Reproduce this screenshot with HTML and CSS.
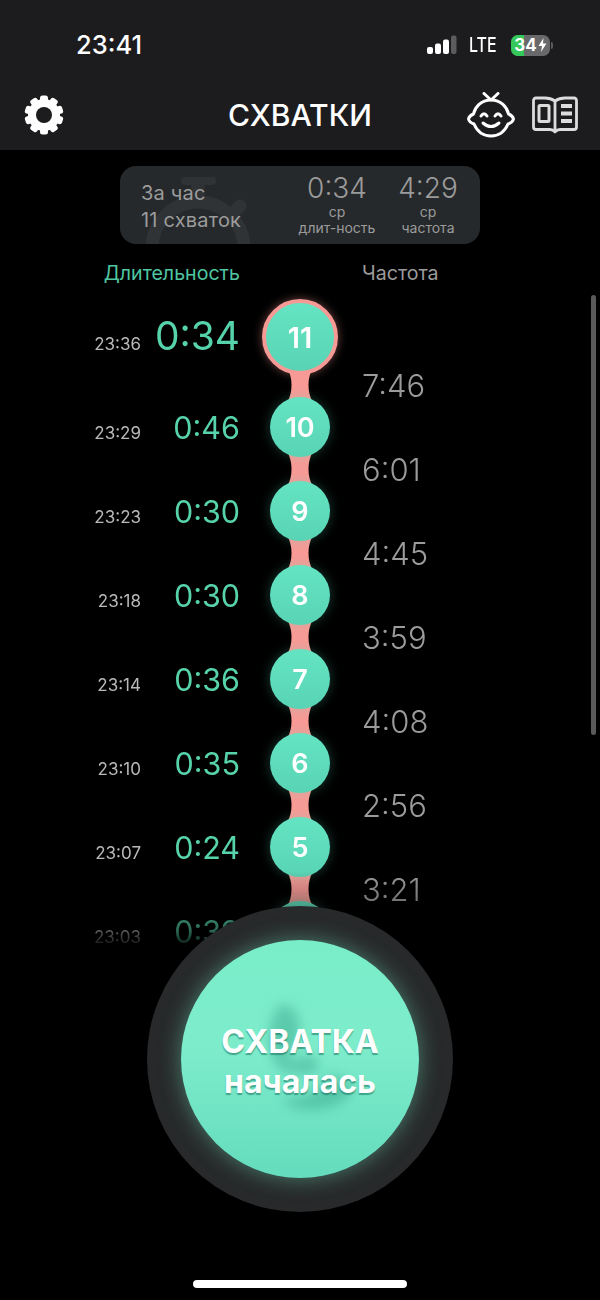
FILE: index.html
```html
<!DOCTYPE html>
<html lang="ru">
<head>
<meta charset="UTF-8">
<meta name="viewport" content="width=device-width, initial-scale=1.0">
<title>Схватки</title>
<link rel="stylesheet" href="styles.css">
</head>
<body>
<div id="screen">
  <div class="top">
    <div class="status">
      <span class="clock">23:41</span>
      <div class="status-right">
        <svg class="signal" width="30" height="20" viewBox="0 0 30 20">
          <rect x="0" y="12" width="6" height="7" rx="2" fill="#fff"/>
          <rect x="8" y="8.500" width="6" height="10.500" rx="2" fill="#fff"/>
          <rect x="16" y="4.500" width="6" height="14.500" rx="2" fill="#fff"/>
          <rect x="24" y="0.500" width="5.500" height="18.500" rx="2" fill="#5c5c5e"/>
        </svg>
        <span class="lte">LTE</span>
        <div class="battery">
          <div class="battery-fill"></div>
          <span class="battery-num">34</span>
          <svg class="bolt" width="9" height="14" viewBox="0 0 9 14"><path d="M5.500 0 L0.500 8 H4 L3 14 L8.500 5.500 H5 Z" fill="#fff"/></svg>
        </div>
        <div class="battery-nub"></div>
      </div>
    </div>
    <div class="nav">
      <svg class="gear" width="40" height="40" viewBox="0 0 40 40">
        <g fill="#fff">
          <rect x="16" y="0.500" width="8" height="39" rx="2.500"/>
          <rect x="16" y="0.500" width="8" height="39" rx="2.500" transform="rotate(36 20 20)"/>
          <rect x="16" y="0.500" width="8" height="39" rx="2.500" transform="rotate(72 20 20)"/>
          <rect x="16" y="0.500" width="8" height="39" rx="2.500" transform="rotate(108 20 20)"/>
          <rect x="16" y="0.500" width="8" height="39" rx="2.500" transform="rotate(144 20 20)"/>
          <circle cx="20" cy="20" r="16"/>
        </g>
        <circle cx="20" cy="20" r="8" fill="#1c1c1e"/>
      </svg>
      <span class="title">СХВАТКИ</span>
      <div class="nav-right">
        <svg width="48" height="46" viewBox="0 0 48 46" fill="none" stroke="#fff" stroke-width="3" stroke-linecap="round" stroke-linejoin="round">
          <path d="M17 1.500 L24 8 L31 1.500"/>
          <path d="M24 8 C14 8 8 15 6.500 22 C4 23 2 25 1.500 27 C2 29 4 31 7 32 C10 39 16 44 24 44 C32 44 38 39 41 32 C44 31 46 29 46.500 27 C46 25 44 23 41.500 22 C40 15 34 8 24 8 Z"/>
          <path d="M14 24 Q17 19.500 20 24"/>
          <path d="M28 24 Q31 19.500 34 24"/>
          <path d="M16 31 Q24 38 32 31"/>
        </svg>
        <svg width="46" height="38" viewBox="0 0 46 38" fill="none" stroke="#dcdcdc" stroke-width="2.800" stroke-linejoin="round">
          <path d="M23 5 C20 3 17 2 13 2 H4 Q1.500 2 1.500 4.500 V31 Q1.500 33.500 4 33.500 H18 Q21 33.500 23 36 Q25 33.500 28 33.500 H42 Q44.500 33.500 44.500 31 V4.500 Q44.500 2 42 2 H33 C29 2 26 3 23 5 Z"/>
          <path d="M23 5 V35"/>
          <rect x="7" y="9.500" width="10" height="16" rx="1" stroke-width="3"/>
          <path d="M29 10 H40 M29 17.500 H40 M29 25 H40" stroke-width="3.800"/>
        </svg>
      </div>
    </div>
  </div>

  <div class="summary">
    <svg class="summary-mark" width="150" height="78" viewBox="0 0 150 78" fill="none" stroke="#303335" stroke-linecap="round">
      <path d="M65 15 H92" stroke-width="8"/>
      <path d="M78 15 V32" stroke-width="13" stroke-linecap="butt"/>
      <circle cx="78" cy="82" r="46" stroke-width="13"/>
      <path d="M110 50 L120 40" stroke-width="13"/>
    </svg>
    <div class="summary-text">
      <div>За час</div>
      <div>11 схваток</div>
    </div>
    <div class="stat stat-dur">
      <div class="stat-num">0:34</div>
      <div class="stat-label">ср</div>
      <div class="stat-label">длит-ность</div>
    </div>
    <div class="stat stat-freq">
      <div class="stat-num">4:29</div>
      <div class="stat-label">ср</div>
      <div class="stat-label">частота</div>
    </div>
  </div>

  <div class="heads">
    <div class="head-dur">Длительность</div>
    <div class="head-freq">Частота</div>
  </div>

  <div class="list">
    <div class="col-rows">
      <div class="row row-first">
        <span class="time">23:36</span>
        <span class="dur">0:34</span>
        <div class="node">11<svg class="neck" width="26" height="36" viewBox="0 0 26 36"><path d="M0 0 H26 C23 6 21.500 11 21.500 18 C21.500 25 23 30 26 36 H0 C3 30 4.500 25 4.500 18 C4.500 11 3 6 0 0 Z"/></svg></div>
      </div>
      <div class="row">
        <span class="time">23:29</span>
        <span class="dur">0:46</span>
        <div class="node">10<svg class="neck" width="26" height="36" viewBox="0 0 26 36"><path d="M0 0 H26 C23 6 21.500 11 21.500 18 C21.500 25 23 30 26 36 H0 C3 30 4.500 25 4.500 18 C4.500 11 3 6 0 0 Z"/></svg></div>
      </div>
      <div class="row">
        <span class="time">23:23</span>
        <span class="dur">0:30</span>
        <div class="node">9<svg class="neck" width="26" height="36" viewBox="0 0 26 36"><path d="M0 0 H26 C23 6 21.500 11 21.500 18 C21.500 25 23 30 26 36 H0 C3 30 4.500 25 4.500 18 C4.500 11 3 6 0 0 Z"/></svg></div>
      </div>
      <div class="row">
        <span class="time">23:18</span>
        <span class="dur">0:30</span>
        <div class="node">8<svg class="neck" width="26" height="36" viewBox="0 0 26 36"><path d="M0 0 H26 C23 6 21.500 11 21.500 18 C21.500 25 23 30 26 36 H0 C3 30 4.500 25 4.500 18 C4.500 11 3 6 0 0 Z"/></svg></div>
      </div>
      <div class="row">
        <span class="time">23:14</span>
        <span class="dur">0:36</span>
        <div class="node">7<svg class="neck" width="26" height="36" viewBox="0 0 26 36"><path d="M0 0 H26 C23 6 21.500 11 21.500 18 C21.500 25 23 30 26 36 H0 C3 30 4.500 25 4.500 18 C4.500 11 3 6 0 0 Z"/></svg></div>
      </div>
      <div class="row">
        <span class="time">23:10</span>
        <span class="dur">0:35</span>
        <div class="node">6<svg class="neck" width="26" height="36" viewBox="0 0 26 36"><path d="M0 0 H26 C23 6 21.500 11 21.500 18 C21.500 25 23 30 26 36 H0 C3 30 4.500 25 4.500 18 C4.500 11 3 6 0 0 Z"/></svg></div>
      </div>
      <div class="row">
        <span class="time">23:07</span>
        <span class="dur">0:24</span>
        <div class="node">5<svg class="neck" width="26" height="36" viewBox="0 0 26 36"><path d="M0 0 H26 C23 6 21.500 11 21.500 18 C21.500 25 23 30 26 36 H0 C3 30 4.500 25 4.500 18 C4.500 11 3 6 0 0 Z"/></svg></div>
      </div>
      <div class="row">
        <span class="time">23:03</span>
        <span class="dur">0:39</span>
        <div class="node">4</div>
      </div>
    </div>
    <div class="col-freq">
      <div class="freq">7:46</div>
      <div class="freq">6:01</div>
      <div class="freq">4:45</div>
      <div class="freq">3:59</div>
      <div class="freq">4:08</div>
      <div class="freq">2:56</div>
      <div class="freq">3:21</div>
    </div>
  </div>

  <div class="scrollbar"></div>

  <div class="big-ring">
    <div class="big-btn">
      <svg class="big-mark" width="238" height="238" viewBox="0 0 238 238">
        <defs><filter id="soft" x="-30%" y="-30%" width="160%" height="160%"><feGaussianBlur stdDeviation="6"/></filter></defs>
        <g fill="#2f9c84" opacity="0.42">
          <path d="M98 66 C112 60 122 78 118 100 C114 112 106 116 104 122 L128 116 C140 118 140 128 130 134 L104 132 C84 120 84 84 98 66 Z" filter="url(#soft)"/>
          <path d="M100 160 C120 176 160 172 172 150 C160 130 148 132 136 150 C124 158 110 158 100 160 Z" filter="url(#soft)"/>
        </g>
      </svg>
      <div class="big-text">СХВАТКА</div>
      <div class="big-text">началась</div>
    </div>
  </div>

  <div class="home-bar"></div>
</div>
</body>
</html>
```

FILE: styles.css
```css
body {
  margin: 0;
  padding: 0;
  background-color: #000;
  font-family: Inter, "Liberation Sans", sans-serif;
  color: #fff;
}
#screen {
  position: relative;
  width: 600px;
  height: 1300px;
  overflow: hidden;
  background-color: #000;
}

/* status bar and nav */
.top {
  height: 150px;
  background-color: #1c1c1e;
}
.status {
  display: flex;
  justify-content: space-between;
  align-items: center;
  height: 90px;
  padding: 0 47px 2px 76px;
  box-sizing: border-box;
}
.clock {
  font-size: 25.500px;
  font-weight: 500;
}
.status-right {
  display: flex;
  align-items: center;
  margin-top: 2px;
}
.signal {
  margin-right: 12px;
}
.lte {
  font-size: 20px;
  font-weight: 500;
  margin-right: 15px;
  display: inline-block;
  width: 27px;
  transform: scaleX(0.8);
  transform-origin: left center;
}
.battery {
  position: relative;
  display: flex;
  align-items: center;
  justify-content: center;
  width: 39px;
  height: 21px;
  border-radius: 7px;
  overflow: hidden;
  background-color: #69696b;
}
.battery-fill {
  position: absolute;
  left: 0;
  top: 0;
  bottom: 0;
  width: 13px;
  background-color: #34c759;
}
.battery-num {
  position: relative;
  font-size: 17px;
  font-weight: 700;
}
.bolt {
  position: relative;
  margin-left: 1px;
}
.battery-nub {
  width: 2px;
  height: 7px;
  margin-left: 1px;
  border-radius: 0 2px 2px 0;
  background-color: #5c5c5e;
}
.nav {
  position: relative;
  display: flex;
  align-items: center;
  justify-content: space-between;
  height: 50px;
  padding: 0 22px 0 24px;
}
.title {
  position: absolute;
  left: 0;
  right: 0;
  text-align: center;
  font-size: 30px;
  font-weight: 500;
}
.nav-right {
  display: flex;
  align-items: center;
  gap: 17px;
}

/* hourly summary */
.summary {
  position: relative;
  display: flex;
  width: 360px;
  height: 78px;
  margin: 16px auto 0;
  box-sizing: border-box;
  overflow: hidden;
  border-radius: 16px;
  background-color: #26292b;
  color: #9b9b9b;
}
.summary-mark {
  position: absolute;
  left: 0;
  top: 0;
}
.summary-text {
  position: relative;
  width: 176px;
  padding: 14px 0 0 21px;
  box-sizing: border-box;
  font-size: 20px;
  line-height: 27px;
  letter-spacing: 0.2px;
}
.stat {
  position: relative;
  text-align: center;
  padding-top: 7px;
}
.stat-dur {
  width: 82px;
}
.stat-freq {
  width: 78px;
  margin-left: 11px;
}
.stat-num {
  font-size: 28px;
  line-height: 31px;
  font-weight: 300;
}
.stat-label {
  font-size: 14px;
  line-height: 16px;
  white-space: nowrap;
}

/* column headings */
.heads {
  display: flex;
  margin-top: 17px;
  font-size: 19.600px;
  line-height: 24px;
}
.head-dur {
  width: 240px;
  text-align: right;
  color: #4fc7a2;
}
.head-freq {
  margin-left: 122px;
  color: #9b9b9b;
}

/* timeline */
.list {
  display: flex;
  height: 660px;
  margin-top: 5px;
  overflow: hidden;
  -webkit-mask-image: linear-gradient(to bottom, #000 88%, rgba(0, 0, 0, 0.5) 97%, transparent 100%);
  mask-image: linear-gradient(to bottom, #000 88%, rgba(0, 0, 0, 0.5) 97%, transparent 100%);
}
.col-rows {
  width: 362px;
  padding-top: 9px;
  flex: none;
}
.row {
  position: relative;
  z-index: 0;
  display: flex;
  align-items: center;
  height: 60px;
  margin-bottom: 24px;
}
.row-first {
  height: 76px;
  margin-bottom: 22px;
}
.time {
  width: 141px;
  margin-top: 12px;
  text-align: right;
  font-size: 17px;
  color: #b9b9b9;
}
.row-first .time {
  margin-top: 14px;
}
.dur {
  width: 99px;
  text-align: right;
  font-size: 30.500px;
  font-weight: 400;
  color: #57d3ac;
}
.row-first .dur {
  margin-top: -4px;
  font-size: 39px;
}
.node {
  position: relative;
  width: 60px;
  height: 60px;
  margin-left: 30px;
  display: flex;
  align-items: center;
  justify-content: center;
  border-radius: 50%;
  background: linear-gradient(to bottom, #64e4c2, #58d4b5);
  box-shadow: 0 0 12px rgba(90, 225, 190, 0.28);
  font-size: 27px;
  font-weight: 600;
}
.row-first .node {
  width: 68px;
  height: 68px;
  margin-left: 22px;
  border: 4px solid #f79a95;
  box-shadow: 0 0 10px rgba(247, 154, 149, 0.45);
  font-size: 29px;
}
/* pink neck between two nodes */
.neck {
  position: absolute;
  z-index: -1;
  left: 17px;
  top: 54px;
  fill: #f89a96;
}
.row-first .neck {
  left: 21px;
  top: 64px;
}
.col-freq {
  padding-top: 54px;
}
.freq {
  height: 84px;
  line-height: 84px;
  font-size: 31px;
  font-weight: 300;
  color: #9b9b9b;
}

.scrollbar {
  position: absolute;
  left: 591px;
  top: 295px;
  width: 5px;
  height: 440px;
  border-radius: 3px;
  background-color: #5a5a5a;
}

/* start button */
.big-ring {
  position: absolute;
  left: 147px;
  top: 906px;
  width: 306px;
  height: 306px;
  display: flex;
  align-items: center;
  justify-content: center;
  border-radius: 50%;
  background-color: #27292a;
}
.big-btn {
  position: relative;
  width: 238px;
  height: 238px;
  display: flex;
  flex-direction: column;
  align-items: center;
  justify-content: center;
  border-radius: 50%;
  background: linear-gradient(to bottom, #79edc8, #7deccb 45%, #64dcbd);
  box-shadow: 0 0 22px rgba(130, 255, 215, 0.4);
}
.big-mark {
  position: absolute;
  left: 0;
  top: 0;
}
.big-text {
  position: relative;
  top: 3px;
  font-size: 32px;
  line-height: 40px;
  font-weight: 700;
  text-shadow: 0 2px 1px rgba(20, 110, 90, 0.55);
}

.home-bar {
  position: absolute;
  left: 193px;
  top: 1280px;
  width: 214px;
  height: 8px;
  border-radius: 4px;
  background-color: #fff;
}
```
